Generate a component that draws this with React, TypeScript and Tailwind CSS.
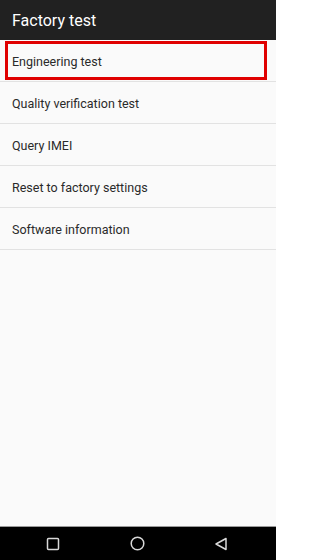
import React from "react";

const items = [
  "Engineering test",
  "Quality verification test",
  "Query IMEI",
  "Reset to factory settings",
  "Software information",
];

export default function App() {
  return (
    <div
      className="w-[276px] h-[560px] flex flex-col bg-[#fafafa]"
      style={{ fontFamily: "Roboto, 'Noto Sans', sans-serif" }}
    >
      <div className="h-10 bg-[#212121] flex items-center px-3 pt-px">
        <span className="text-white text-[16px] font-normal">Factory test</span>
      </div>
      <div className="flex-1 flex flex-col">
        {items.map((t, i) => (
          <div
            key={t}
            className="relative h-[42px] flex items-center px-3 pt-1 border-b border-[#e2e2e2]"
          >
            <span className="text-[12.5px] text-[#2a2a2a]">{t}</span>
            {i === 0 && (
              <div className="absolute top-px bottom-px left-[5px] right-[9px] border-[3px] border-[#e00000]" />
            )}
          </div>
        ))}
      </div>
      <div className="h-[34px] bg-black border-t border-[#9a9a9a] flex items-center justify-between pl-[46px] pr-[48px]">
        <svg width="14" height="14" viewBox="0 0 14 14">
          <rect x="1.5" y="1.5" width="11" height="11" rx="1" fill="none" stroke="#d8d8d8" strokeWidth="1.5" />
        </svg>
        <svg width="15" height="15" viewBox="0 0 15 15">
          <circle cx="7.5" cy="7.5" r="6.3" fill="none" stroke="#d8d8d8" strokeWidth="1.5" />
        </svg>
        <svg width="14" height="14" viewBox="0 0 14 14">
          <path d="M12 1.5 L2 7 L12 12.5 Z" fill="none" stroke="#d8d8d8" strokeWidth="1.5" strokeLinejoin="round" />
        </svg>
      </div>
    </div>
  );
}
